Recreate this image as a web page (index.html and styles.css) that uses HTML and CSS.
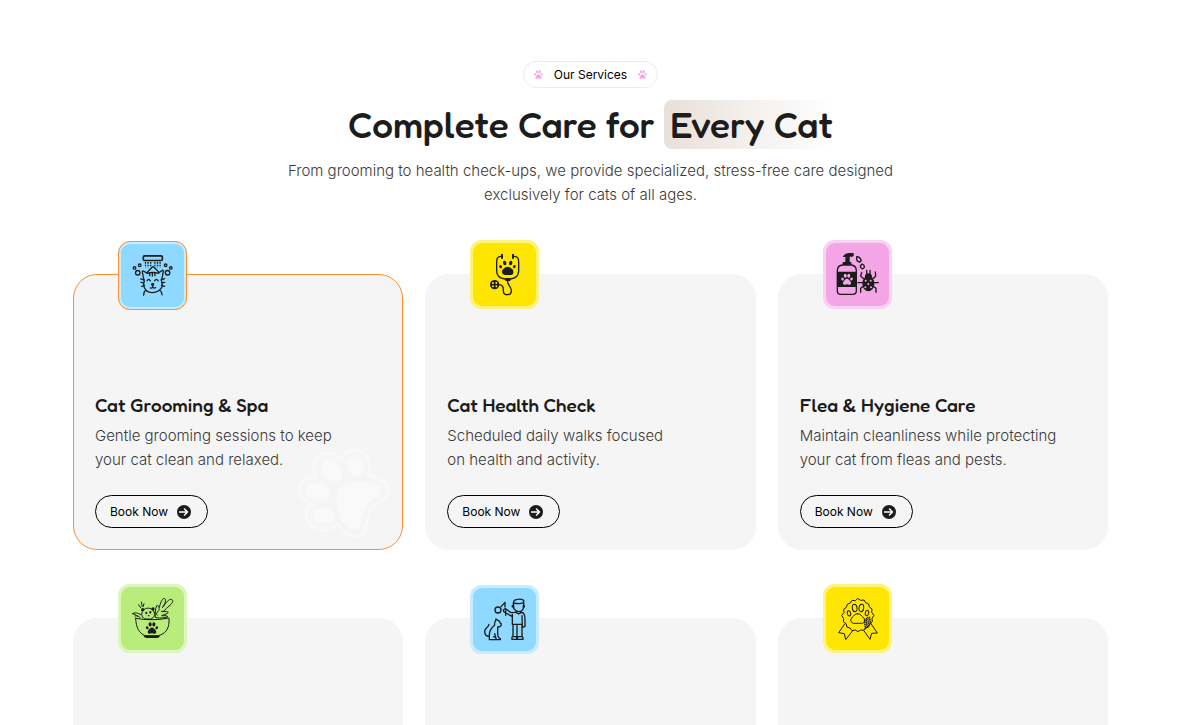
FILE: index.html
```html
<!DOCTYPE html>
<html lang="en">
<head>
<meta charset="utf-8">
<meta name="viewport" content="width=device-width, initial-scale=1">
<title>Our Services</title>
<link rel="stylesheet" href="styles.css">
</head>
<body>
<svg class="sprite" aria-hidden="true">
  <symbol id="paw" viewBox="0 0 48 48">
    <ellipse cx="6" cy="23" rx="5" ry="6" transform="rotate(-25 6 23)"/>
    <ellipse cx="17" cy="10" rx="6" ry="8" transform="rotate(-8 17 10)"/>
    <ellipse cx="31" cy="10" rx="6" ry="8" transform="rotate(8 31 10)"/>
    <ellipse cx="42" cy="23" rx="5" ry="6" transform="rotate(25 42 23)"/>
    <path d="M24 22c-7 0-9 6-13 10-5 5-4 13 2 14 4 1 7-2 11-2s7 3 11 2c6-1 7-9 2-14-4-4-6-10-13-10z"/>
  </symbol>
  <symbol id="arrow" viewBox="0 0 28 28">
    <circle cx="14" cy="14" r="14" fill="#1c1c1c"/>
    <path d="M5 14h16M15 8l6 6-6 6" fill="none" stroke="#fff" stroke-width="3" stroke-linecap="round" stroke-linejoin="round"/>
  </symbol>
</svg>

<section class="services">
  <header class="intro">
    <p class="badge">
      <svg class="badge-paw" aria-hidden="true"><use href="#paw"/></svg>
      <span>Our Services</span>
      <svg class="badge-paw" aria-hidden="true"><use href="#paw"/></svg>
    </p>
    <h2 class="heading">Complete Care for <span class="highlight">Every Cat</span></h2>
    <p class="lead">From grooming to health check-ups, we provide specialized, stress-free care designed exclusively for cats of all ages.</p>
  </header>

  <div class="cards">
    <article class="card card-active">
      <span class="tile tile-blue tile-low">
        <svg class="art" viewBox="24 27 207 207" aria-hidden="true">
          <g class="line">
            <rect x="99" y="70" width="59" height="14" rx="4" stroke-width="5"/>
            <path stroke-linecap="butt" stroke-dasharray="5 3" d="M106 89v17M114 89v17M122 89v14M135 89v14M143 89v17M151 89v17"/>
            <path d="M111 121l15-16 3-2 4 3 14 14M119 131v-9M127 132v-10M135 131v-9M112 124q16-6 34 0"/>
            <path d="M112 124l-14-8-2 3 3 16 3 12c-3 10-3 20 5 28l3 3M146 123l12-9 3 2-3 18-3 12c4 10 3 22-4 28l-3 3"/>
            <path d="M106 177q21 13 42 0M103 179q-2 5-3 12M153 178q3 5 4 12M91 141l11 4M92 152l9 1M94 164l9-3M154 144l11-4M156 153l9-1M155 161l10 3"/>
            <path d="M111 147q4-9 10 0M134 147q5-9 11 0M121 169q5 2 7-3v-5M128 166q3 5 9 2"/>
            <circle cx="128" cy="158" r="3" fill="#1c1c1c"/>
            <circle cx="82" cy="122" r="7"/><circle cx="174" cy="122" r="7"/>
            <circle cx="88" cy="99" r="4"/><circle cx="168" cy="99" r="4"/>
            <circle cx="72" cy="107" r="4"/><circle cx="184" cy="107" r="4"/>
          </g>
        </svg>
      </span>
      <h3 class="card-title">Cat Grooming &amp; Spa</h3>
      <p class="card-text">Gentle grooming sessions to keep<br>your cat clean and relaxed.</p>
      <button class="book" type="button">Book Now <svg class="book-arrow" aria-hidden="true"><use href="#arrow"/></svg></button>
      <svg class="watermark" viewBox="24 22 282 274" aria-hidden="true">
        <path d="M72 83C72 55 92 34 119 37C134 38 145 43 156 55C167 34 181 24 203 27C235 33 249 68 239 105C265 108 304 128 302 155C300 177 274 184 259 197C236 217 238 252 229 273C221 296 197 298 180 287C166 280 155 267 145 254C127 269 110 278 89 272C59 266 40 235 53 210C59 200 65 196 70 194C48 188 26 172 27 149C30 121 54 107 81 113C75 103 72 94 72 83Z" fill="none" stroke="#f9f9f9" stroke-width="6"/>
        <g fill="#f9f9f9">
          <ellipse cx="127" cy="91" rx="27" ry="37" transform="rotate(-38 127 91)"/>
          <ellipse cx="201" cy="78" rx="25" ry="32" transform="rotate(-24 201 78)"/>
          <ellipse cx="84" cy="155" rx="37" ry="26" transform="rotate(10 84 155)"/>
          <ellipse cx="102" cy="228" rx="33" ry="24"/>
          <path d="M142 181C143 149 160 132 191 126C221 119 266 127 279 148C286 164 263 171 249 183C220 205 221 240 212 262C206 276 190 273 177 263C155 246 141 219 142 181Z"/>
        </g>
      </svg>
    </article>

    <article class="card">
      <span class="tile tile-yellow">
        <svg class="art" viewBox="24 24 207 207" aria-hidden="true">
          <g class="line">
            <path d="M116 73c-12 1-12 9-12 20v24c0 13 10 22 25 24h16c15-2 25-11 25-24V93c0-11 0-19-12-20"/>
            <path d="M137 144v5c0 11 11 15 11 27 0 7-5 12-12 12-7 0-12-5-12-12 0-11-1-18-14-18"/>
          </g>
          <path d="M117 66h6v14h-6zM150 66h6v14h-6zM130 138h15v9h-15z" fill="#1c1c1c"/>
          <g fill="#1c1c1c">
            <ellipse cx="128" cy="93" rx="5" ry="7" transform="rotate(-12 128 93)"/><ellipse cx="146" cy="93" rx="5" ry="7" transform="rotate(12 146 93)"/>
            <ellipse cx="116" cy="104" rx="4" ry="5" transform="rotate(-30 116 104)"/><ellipse cx="157" cy="104" rx="4" ry="5" transform="rotate(30 157 104)"/>
            <path d="M137 104c-6 0-10 4-14 8-6 6-3 15 5 17h18c8 0 11-11 5-17-4-4-8-8-14-8z"/>
            <circle cx="98" cy="158" r="14"/>
          </g>
          <g fill="#ffe600"><circle cx="93" cy="153" r="3"/><circle cx="103" cy="153" r="3"/><circle cx="93" cy="163" r="3"/><circle cx="103" cy="163" r="3"/></g>
        </svg>
      </span>
      <h3 class="card-title">Cat Health Check</h3>
      <p class="card-text">Scheduled daily walks focused<br>on health and activity.</p>
      <button class="book" type="button">Book Now <svg class="book-arrow" aria-hidden="true"><use href="#arrow"/></svg></button>
    </article>

    <article class="card">
      <span class="tile tile-pink">
        <svg class="art" viewBox="24 24 207 207" aria-hidden="true">
          <g class="line">
            <path d="M83 99q-16 1-16 17v60q0 11 11 11h35q11 0 11-11v-60q0-16-16-17z"/>
            <path d="M125 74q9 0 13 9 1 6-4 7-8-1-9-7zM141 96q8 3 7 10-2 5-7 4-6-3-5-8z"/>
          </g>
          <path d="M67 119h57v46H67zM83 90h26v9H83zM91 75h13v15H91zM84 75c3-9 11-12 20-12h12v9l-6 3-4-2v3z" fill="#1c1c1c"/>
          <svg x="78" y="124" width="36" height="36" fill="#f3a5e6"><use href="#paw"/></svg>
          <g fill="#1c1c1c"><ellipse cx="160" cy="155" rx="18" ry="23"/><path d="M149 137q1-13 11-13 11 0 12 13z"/></g>
          <path class="line" d="M155 125v-10M165 125v-10M146 140l-9-8 3-11M174 140l8-7-1-13M142 152h-13M178 152h12M143 164l-6 5v12M177 164l6 5v12"/>
          <g fill="#f3a5e6"><circle cx="152" cy="146" r="3"/><circle cx="167" cy="146" r="3"/><circle cx="160" cy="156" r="3"/><circle cx="151" cy="166" r="3"/><circle cx="168" cy="166" r="3"/></g>
        </svg>
      </span>
      <h3 class="card-title">Flea &amp; Hygiene Care</h3>
      <p class="card-text">Maintain cleanliness while protecting<br>your cat from fleas and pests.</p>
      <button class="book" type="button">Book Now <svg class="book-arrow" aria-hidden="true"><use href="#arrow"/></svg></button>
    </article>

    <article class="card">
      <span class="tile tile-green">
        <svg class="art" viewBox="24 21 207 207" aria-hidden="true">
          <g class="line thin">
            <path d="M77 124q50 9 100-1v12c-1 22-11 35-32 41h-40c-18-8-27-24-28-52z"/>
            <path d="M99 100c-8 11-3 25 9 26h14c11-3 15-15 8-25-7-10-24-10-31-1z"/>
            <path d="M86 83l6 9M94 75l3 14M102 80l-2 8M68 110c4-5 16-2 25 3M68 110c5 2 9 3 14 8M75 117c5-2 12-1 15 5"/>
            <path d="M136 121c0-13-1-25 4-35 7-3 8 6 7 14M148 91c3-11 7-26 15-27 7 2 2 18-6 28 7-8 16-24 25-25 8 0 8 8 1 15-9 9-17 14-24 22M154 103c7 1 15-1 21 3-4 6-13 6-20 10 7 1 13-2 19 3-7 3-20 6-36 3M144 102q-9 9-3 13"/>
          </g>
          <g fill="#1c1c1c">
            <circle cx="98" cy="98" r="5"/><circle cx="129" cy="96" r="5"/><path d="M100 176h50q-2 7-12 7h-27q-8 0-11-7z"/>
            <ellipse cx="109" cy="108" rx="3" ry="4"/><ellipse cx="121" cy="106" rx="3" ry="4"/><ellipse cx="116" cy="116" rx="3" ry="2"/>
          </g>
          <svg x="106" y="134" width="40" height="38" fill="#1c1c1c"><use href="#paw"/></svg>
        </svg>
      </span>
    </article>

    <article class="card">
      <span class="tile tile-blue tile-low">
        <svg class="art" viewBox="24 27 207 207" aria-hidden="true">
          <g class="line">
            <path d="M155 89q-5-18 12-19 10-2 18 3v15M156 81q16 4 29-1M155 88v9q7 10 14 10 14 0 15-11v-8M151 88v5M187 88v5M163 106v4l7 4 7-4v-4"/>
            <path d="M162 109l-15 1-17-12-6 4 2 6 24 13M151 115v30M177 109l7 2q5 6 5 18v22l-8 3-1-35M152 145h28M180 147v35M165 149v33M153 148v34M151 182h13v8h-14q-1-5 1-8zM166 182h15q3 3 2 8h-17z"/>
            <path d="M117 92l12-13v14M131 104v14"/><circle cx="108" cy="102" r="9"/>
            <path d="M101 134l1-5 5 4q6 0 7 7l4 3c0 7-5 10-11 10v18c0 11 1 15 8 17v3h-12l-5-18M101 134q-5 5-3 13c-9 8-16 18-16 29v15h20q2-6-7-9M81 181c-8 0-13-6-13-16 0-9 13-12 13-20"/>
          </g>
        </svg>
      </span>
    </article>

    <article class="card">
      <span class="tile tile-yellow">
        <svg class="art" viewBox="24 21 207 207" aria-hidden="true">
          <g class="line thin">
            <path d="M129 65l8 5 10-1 5 8 9 4 2 9 8 6-1 10 7 9-6 9 1 10-8 6-3 10-10 3-5 7-9-1-8 5-8-5-10 2-6-8-9-3-3-10-8-6 1-9-6-10 7-8-1-10 8-6 3-9 9-4 5-8 9 1z"/>
            <ellipse cx="119" cy="93" rx="7" ry="11" transform="rotate(-8 119 93)"/><ellipse cx="139" cy="93" rx="7" ry="11" transform="rotate(8 139 93)"/>
            <ellipse cx="102" cy="109" rx="5" ry="8" transform="rotate(-14 102 109)"/><ellipse cx="156" cy="108" rx="5" ry="8" transform="rotate(14 156 108)"/>
            <path d="M128 110c-9 0-13 8-18 13-6 7-1 16 7 16h23c8 0 12-9 6-16-5-5-9-13-18-13z"/>
            <path d="M89 141l-18 26 17 3 4 18 21-27M168 140l19 28-17 1-5 18-19-27"/>
          </g>
          <path class="line" stroke-dasharray="2 5" d="M148 131l10-10M148 137l16-16M149 143l17-17M150 149l17-17M151 155l16-16"/>
        </svg>
      </span>
    </article>
  </div>
</section>
</body>
</html>
```
FILE: styles.css
```css
* {
  box-sizing: border-box;
}

body {
  margin: 0;
  background: #fff;
  color: #1c1c1c;
  font-family: Inter, "Liberation Sans", sans-serif;
}

h2, h3, p {
  margin: 0;
}

.sprite {
  display: none;
}

.services {
  height: 100vh;
  overflow: hidden;
  padding: 61px 77px 0 73px;
}

.intro {
  display: flex;
  flex-direction: column;
  align-items: center;
  text-align: center;
}

.badge {
  display: flex;
  align-items: center;
  gap: 11px;
  padding: 0 10px;
  border: 1px solid #ebebeb;
  border-radius: 16px;
  color: #000;
  font-size: 12px;
  line-height: 25px;
}

.badge-paw {
  width: 9px;
  height: 9px;
  fill: #f3a5e6;
}

.heading {
  margin-top: 12px;
  font-family: Fredoka, Lato, sans-serif;
  font-size: 37px;
  font-weight: 500;
  line-height: 49px;
}

.highlight {
  display: inline-block;
  padding-left: 6px;
  border-radius: 8px;
  background: linear-gradient(90deg, #e8e0d9, #fff);
}

.lead {
  max-width: 620px;
  margin-top: 10px;
  color: #3a3a3a;
  font-size: 15px;
  font-weight: 300;
  line-height: 24px;
}

.cards {
  display: grid;
  grid-template-columns: repeat(3, 1fr);
  gap: 68px 22px;
  margin-top: 67px;
}

.card {
  position: relative;
  display: flex;
  flex-direction: column;
  align-items: flex-start;
  min-height: 276px;
  padding: 117px 21px 21px;
  border: 1px solid #f5f5f5;
  border-radius: 24px;
  background: #f5f5f5;
}

.card-active {
  border-color: #fd8f2f;
}

.tile {
  position: absolute;
  top: -35px;
  left: 44px;
  width: 69px;
  height: 69px;
  border-radius: 12px;
  box-shadow: inset 0 0 0 3px rgba(255, 255, 255, 0.5);
}

.tile-low {
  top: -34px;
}

.card-active .tile {
  border: 1px solid #fd8f2f;
  box-shadow: inset 0 0 0 2px rgba(255, 255, 255, 0.5);
}

.tile-blue {
  background: #8fd8ff;
}

.tile-yellow {
  background: #ffe600;
}

.tile-pink {
  background: #f3a5e6;
}

.tile-green {
  background: #b9ed7b;
}

.art {
  display: block;
  width: 100%;
  height: 100%;
}

.line {
  fill: none;
  stroke: #1c1c1c;
  stroke-width: 4;
  stroke-linecap: round;
  stroke-linejoin: round;
}

.thin {
  stroke-width: 3;
}

.card-title {
  font-family: Fredoka, Lato, sans-serif;
  font-size: 19px;
  font-weight: 500;
  line-height: 26px;
}

.card-text {
  margin-top: 6px;
  color: #3a3a3a;
  font-size: 15px;
  font-weight: 300;
  line-height: 24px;
}

.book {
  display: flex;
  align-items: center;
  gap: 9px;
  margin-top: 23px;
  padding: 0 16px 0 14px;
  border: 1px solid #000;
  border-radius: 17px;
  background: transparent;
  color: #000;
  font-family: inherit;
  font-size: 12px;
  line-height: 31px;
}

.book-arrow {
  width: 14px;
  height: 14px;
}

.watermark {
  position: absolute;
  right: 12px;
  bottom: 10px;
  width: 92px;
  height: 92px;
}
```
